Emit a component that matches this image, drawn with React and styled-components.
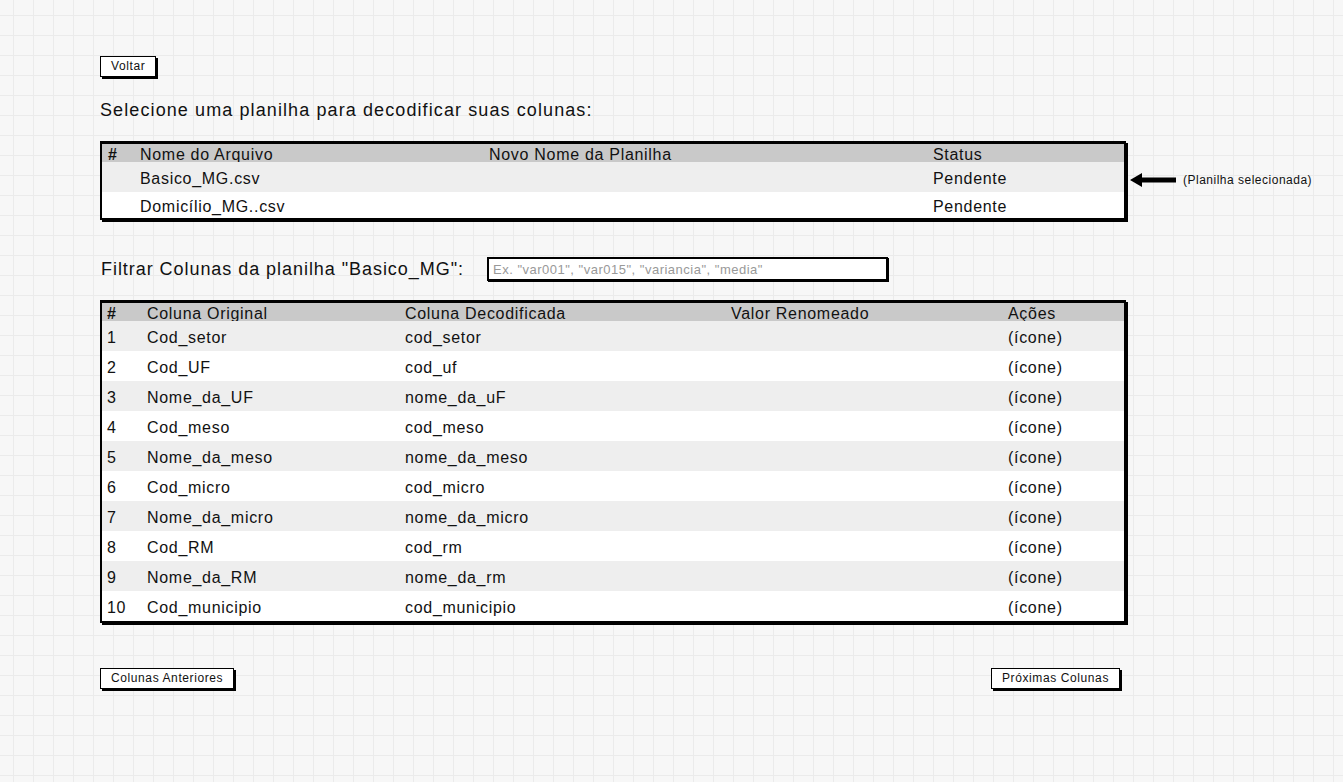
import React from 'react'
import styled, { createGlobalStyle } from 'styled-components'

const GlobalStyle = createGlobalStyle`
  html, body {
    margin: 0;
    padding: 0;
  }
  body {
    width: 1343px;
    min-height: 782px;
    background-color: #f7f7f7;
    background-image:
      linear-gradient(#ebebeb 1px, transparent 1px),
      linear-gradient(90deg, #ebebeb 1px, transparent 1px);
    background-size: 20px 20px;
    background-position: 13px 15px;
    font-family: 'Liberation Sans', Arial, sans-serif;
    color: #111;
  }
`

const Page = styled.div`
  padding: 56px 0 0 100px;
  display: flex;
  flex-direction: column;
`

const SketchButton = styled.button`
  align-self: flex-start;
  font-family: inherit;
  font-size: 12px;
  letter-spacing: 0.6px;
  color: #111;
  background: #fff;
  border: 1.5px solid #000;
  box-shadow: 2px 2px 0 #000;
  padding: 3px 10px 3px;
  height: 21px;
  line-height: 13px;
  cursor: pointer;
`

const Title = styled.h2`
  margin: 23px 0 0 0;
  font-size: 18px;
  font-weight: normal;
  letter-spacing: 1.1px;
`

const TableRow = styled.div`
  display: flex;
  align-items: flex-start;
  margin-top: ${p => p.$top}px;
`

const TableBox = styled.div`
  width: 1022px;
  border: 2px solid #000;
  border-top-width: 3px;
  box-shadow: 2px 2px 0 #000;
  background: #fff;
`

const Row = styled.div`
  display: grid;
  grid-template-columns: ${p => p.$cols};
  height: ${p => p.$h || (p.$head ? 18 : 30)}px;
  align-items: center;
  background: ${p => (p.$head ? '#c9c9c9' : p.$alt ? '#eeeeee' : '#fff')};
  font-size: 16px;
  letter-spacing: 0.7px;
  padding-top: ${p => (p.$head ? 2 : 4)}px;
  box-sizing: border-box;
  overflow: hidden;
`

const Cell = styled.span`
  padding-left: ${p => p.$pad || 0}px;
  font-weight: ${p => (p.$bold ? 'bold' : 'normal')};
  white-space: nowrap;
`

const Annotation = styled.div`
  display: flex;
  align-items: center;
  margin: 31px 0 0 3px;
  font-size: 12px;
  gap: 6px;
  letter-spacing: 0.5px;
`

const FilterBar = styled.div`
  display: flex;
  align-items: center;
  margin-top: 37px;
  margin-left: 1px;
`

const FilterLabel = styled.label`
  font-size: 18px;
  letter-spacing: 0.95px;
  width: 386px;
`

const FilterInput = styled.input`
  width: 401px;
  height: 24px;
  box-sizing: border-box;
  border: 2px solid #000;
  box-shadow: 1px 1px 0 #000;
  background: #fff;
  font-family: inherit;
  font-size: 13px;
  letter-spacing: 0.5px;
  padding: 0 4px;
  outline: none;
  &::placeholder {
    color: #999;
  }
`

const Footer = styled.div`
  display: flex;
  justify-content: space-between;
  width: 1020px;
  margin-top: 45px;
`

const fileCols = '38px 349px 444px 1fr'
const colCols = '45px 258px 326px 277px 1fr'

const files = [
  { name: 'Basico_MG.csv', status: 'Pendente' },
  { name: 'Domicílio_MG..csv', status: 'Pendente', h: 26 }
]

const columns = [
  ['Cod_setor', 'cod_setor'],
  ['Cod_UF', 'cod_uf'],
  ['Nome_da_UF', 'nome_da_uF'],
  ['Cod_meso', 'cod_meso'],
  ['Nome_da_meso', 'nome_da_meso'],
  ['Cod_micro', 'cod_micro'],
  ['Nome_da_micro', 'nome_da_micro'],
  ['Cod_RM', 'cod_rm'],
  ['Nome_da_RM', 'nome_da_rm'],
  ['Cod_municipio', 'cod_municipio']
]

const ArrowLeft = () => (
  <svg width="48" height="16" viewBox="0 0 48 16">
    <path d="M1 8 L13 1 L13 5.5 L47 5.5 L47 10.5 L13 10.5 L13 15 Z" fill="#000" />
  </svg>
)

const App = () => {
  return (
    <Page>
      <GlobalStyle />
      <SketchButton>Voltar</SketchButton>
      <Title>Selecione uma planilha para decodificar suas colunas:</Title>

      <TableRow $top={20}>
        <TableBox>
          <Row $head $cols={fileCols}>
            <Cell $pad={6} $bold>#</Cell>
            <Cell>Nome do Arquivo</Cell>
            <Cell>Novo Nome da Planilha</Cell>
            <Cell>Status</Cell>
          </Row>
          {files.map((f, i) => (
            <Row key={f.name} $cols={fileCols} $alt={i % 2 === 0} $h={f.h}>
              <Cell />
              <Cell>{f.name}</Cell>
              <Cell />
              <Cell>{f.status}</Cell>
            </Row>
          ))}
        </TableBox>
        <Annotation>
          <ArrowLeft />
          <span>(Planilha selecionada)</span>
        </Annotation>
      </TableRow>

      <FilterBar>
        <FilterLabel>Filtrar Colunas da planilha "Basico_MG":</FilterLabel>
        <FilterInput placeholder={'Ex. "var001", "var015", "variancia", "media"'} />
      </FilterBar>

      <TableRow $top={19}>
        <TableBox>
          <Row $head $cols={colCols}>
            <Cell $pad={5} $bold>#</Cell>
            <Cell>Coluna Original</Cell>
            <Cell>Coluna Decodificada</Cell>
            <Cell>Valor Renomeado</Cell>
            <Cell>Ações</Cell>
          </Row>
          {columns.map(([orig, dec], i) => (
            <Row key={orig} $cols={colCols} $alt={i % 2 === 0}>
              <Cell $pad={5}>{i + 1}</Cell>
              <Cell>{orig}</Cell>
              <Cell>{dec}</Cell>
              <Cell />
              <Cell>(ícone)</Cell>
            </Row>
          ))}
        </TableBox>
      </TableRow>

      <Footer>
        <SketchButton>Colunas Anteriores</SketchButton>
        <SketchButton>Próximas Colunas</SketchButton>
      </Footer>
    </Page>
  )
}

export default App
